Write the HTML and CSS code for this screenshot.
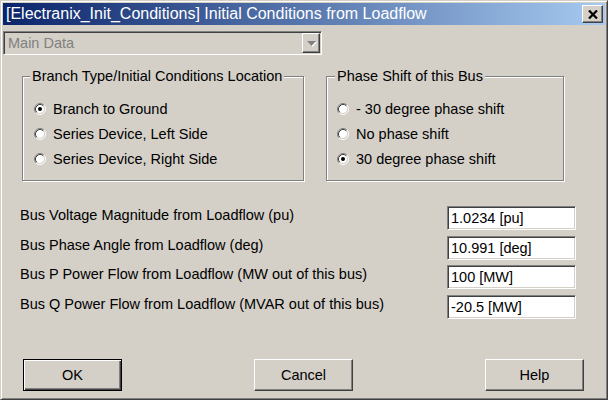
FILE: index.html
```html
<!DOCTYPE html>
<html>
<head>
<meta charset="utf-8">
<link rel="stylesheet" href="styles.css">
</head>
<body>
<div class="window">
  <div class="titlebar">
    <span class="title">[Electranix_Init_Conditions] Initial Conditions from Loadflow</span>
    <span class="close-btn"><svg width="10" height="9" viewBox="0 0 10 9"><path d="M1 0.5L9 8.5M9 0.5L1 8.5" stroke="#000" stroke-width="2.2"/></svg></span>
  </div>
  <div class="content">
    <div class="select">
      <span class="select-text">Main Data</span>
      <span class="select-btn"><svg width="11" height="7" viewBox="0 0 11 7"><path d="M2 2h9l-4.5 5z" fill="#fff"/><path d="M1 1h9l-4.5 5z" fill="#808080"/></svg></span>
    </div>
    <div class="groups">
      <fieldset class="group group-left">
        <legend>Branch Type/Initial Conditions Location</legend>
        <div class="radio-row"><svg class="radio" width="12" height="12" viewBox="0 0 12 12"><circle cx="6" cy="6" r="4.5" fill="#fff"/><path d="M2.11 9.89A5.5 5.5 0 0 1 9.89 2.11" stroke="#808080" fill="none"/><path d="M9.89 2.11A5.5 5.5 0 0 1 2.11 9.89" stroke="#fff" fill="none"/><path d="M2.82 9.18A4.5 4.5 0 0 1 9.18 2.82" stroke="#404040" fill="none"/><path d="M9.18 2.82A4.5 4.5 0 0 1 2.82 9.18" stroke="#d4d0c8" fill="none"/><circle cx="6" cy="6" r="2" fill="#000"/></svg><span>Branch to Ground</span></div>
        <div class="radio-row"><svg class="radio" width="12" height="12" viewBox="0 0 12 12"><circle cx="6" cy="6" r="4.5" fill="#fff"/><path d="M2.11 9.89A5.5 5.5 0 0 1 9.89 2.11" stroke="#808080" fill="none"/><path d="M9.89 2.11A5.5 5.5 0 0 1 2.11 9.89" stroke="#fff" fill="none"/><path d="M2.82 9.18A4.5 4.5 0 0 1 9.18 2.82" stroke="#404040" fill="none"/><path d="M9.18 2.82A4.5 4.5 0 0 1 2.82 9.18" stroke="#d4d0c8" fill="none"/></svg><span>Series Device, Left Side</span></div>
        <div class="radio-row"><svg class="radio" width="12" height="12" viewBox="0 0 12 12"><circle cx="6" cy="6" r="4.5" fill="#fff"/><path d="M2.11 9.89A5.5 5.5 0 0 1 9.89 2.11" stroke="#808080" fill="none"/><path d="M9.89 2.11A5.5 5.5 0 0 1 2.11 9.89" stroke="#fff" fill="none"/><path d="M2.82 9.18A4.5 4.5 0 0 1 9.18 2.82" stroke="#404040" fill="none"/><path d="M9.18 2.82A4.5 4.5 0 0 1 2.82 9.18" stroke="#d4d0c8" fill="none"/></svg><span>Series Device, Right Side</span></div>
      </fieldset>
      <fieldset class="group group-right">
        <legend>Phase Shift of this Bus</legend>
        <div class="radio-row"><svg class="radio" width="12" height="12" viewBox="0 0 12 12"><circle cx="6" cy="6" r="4.5" fill="#fff"/><path d="M2.11 9.89A5.5 5.5 0 0 1 9.89 2.11" stroke="#808080" fill="none"/><path d="M9.89 2.11A5.5 5.5 0 0 1 2.11 9.89" stroke="#fff" fill="none"/><path d="M2.82 9.18A4.5 4.5 0 0 1 9.18 2.82" stroke="#404040" fill="none"/><path d="M9.18 2.82A4.5 4.5 0 0 1 2.82 9.18" stroke="#d4d0c8" fill="none"/></svg><span>- 30 degree phase shift</span></div>
        <div class="radio-row"><svg class="radio" width="12" height="12" viewBox="0 0 12 12"><circle cx="6" cy="6" r="4.5" fill="#fff"/><path d="M2.11 9.89A5.5 5.5 0 0 1 9.89 2.11" stroke="#808080" fill="none"/><path d="M9.89 2.11A5.5 5.5 0 0 1 2.11 9.89" stroke="#fff" fill="none"/><path d="M2.82 9.18A4.5 4.5 0 0 1 9.18 2.82" stroke="#404040" fill="none"/><path d="M9.18 2.82A4.5 4.5 0 0 1 2.82 9.18" stroke="#d4d0c8" fill="none"/></svg><span>No phase shift</span></div>
        <div class="radio-row"><svg class="radio" width="12" height="12" viewBox="0 0 12 12"><circle cx="6" cy="6" r="4.5" fill="#fff"/><path d="M2.11 9.89A5.5 5.5 0 0 1 9.89 2.11" stroke="#808080" fill="none"/><path d="M9.89 2.11A5.5 5.5 0 0 1 2.11 9.89" stroke="#fff" fill="none"/><path d="M2.82 9.18A4.5 4.5 0 0 1 9.18 2.82" stroke="#404040" fill="none"/><path d="M9.18 2.82A4.5 4.5 0 0 1 2.82 9.18" stroke="#d4d0c8" fill="none"/><circle cx="6" cy="6" r="2" fill="#000"/></svg><span>30 degree phase shift</span></div>
      </fieldset>
    </div>
    <div class="fields">
      <div class="field-row"><span class="field-label">Bus Voltage Magnitude from Loadflow (pu)</span><span class="field-input">1.0234 [pu]</span></div>
      <div class="field-row"><span class="field-label">Bus Phase Angle from Loadflow (deg)</span><span class="field-input">10.991 [deg]</span></div>
      <div class="field-row"><span class="field-label">Bus P Power Flow from Loadflow (MW out of this bus)</span><span class="field-input">100 [MW]</span></div>
      <div class="field-row"><span class="field-label">Bus Q Power Flow from Loadflow (MVAR out of this bus)</span><span class="field-input">-20.5 [MW]</span></div>
    </div>
    <div class="buttons">
      <span class="btn btn-default">OK</span>
      <span class="btn">Cancel</span>
      <span class="btn">Help</span>
    </div>
  </div>
</div>
</body>
</html>
```
FILE: styles.css
```css
html, body {
  margin: 0;
  padding: 0;
  background: #d4d0c8;
}
body {
  font-family: "Liberation Sans", Arial, sans-serif;
  font-size: 14.5px;
  color: #000;
}
.window {
  width: 608px;
  height: 400px;
  box-sizing: border-box;
  border: 1px solid;
  border-color: #d4d0c8 #404040 #404040 #d4d0c8;
  box-shadow: inset 1px 1px #fff, inset -1px -1px #808080;
  padding: 2px;
  background: #d4d0c8;
}
.titlebar {
  height: 22px;
  background: linear-gradient(to right, #0a246a, #a6caf0);
  display: flex;
  align-items: center;
  justify-content: space-between;
  padding: 0 2px 0 3px;
}
.title {
  color: #fff;
  font-size: 16px;
  line-height: 18px;
  white-space: nowrap;
}
.close-btn {
  width: 21px;
  height: 18px;
  box-sizing: border-box;
  background: #d4d0c8;
  border: 1px solid;
  border-color: #fff #404040 #404040 #fff;
  box-shadow: inset -1px -1px #808080;
  display: flex;
  align-items: center;
  justify-content: center;
}
.content {
  display: flex;
  flex-direction: column;
}
.select {
  margin-top: 6px;
  width: 319px;
  height: 24px;
  box-sizing: border-box;
  border: 1px solid;
  border-color: #808080 #fff #fff #808080;
  box-shadow: inset 1px 1px #404040, inset -1px -1px #d4d0c8;
  padding: 1px;
  display: flex;
  align-items: stretch;
}
.select-text {
  flex: 1;
  color: #808080;
  padding-left: 3px;
  line-height: 20px;
}
.select-btn {
  width: 18px;
  box-sizing: border-box;
  border: 1px solid;
  border-color: #fff #404040 #404040 #fff;
  box-shadow: inset -1px -1px #808080;
  display: flex;
  align-items: center;
  justify-content: center;
}
.groups {
  display: flex;
  margin-top: 13px;
}
.group {
  margin: 0;
  min-inline-size: 0;
  box-sizing: border-box;
  border: 1px solid #808080;
  box-shadow: inset 1px 1px #fff, 1px 1px #fff;
  padding: 12px 0 9px 11px;
}
.group legend {
  padding: 0 2px;
  margin-left: -4px;
  line-height: 16px;
  background: #d4d0c8;
}
.group-left {
  margin-left: 19px;
  width: 282px;
}
.group-right {
  margin-left: 22px;
  width: 238px;
  padding-left: 10px;
}
.group-right legend {
  margin-left: -2px;
}
.radio-row {
  display: flex;
  align-items: center;
  height: 25px;
}
.radio {
  margin-right: 7px;
  flex: none;
}
.fields {
  margin-top: 25px;
  display: flex;
  flex-direction: column;
}
.field-row {
  display: flex;
  align-items: flex-start;
  height: 24px;
  margin-bottom: 5.5px;
}
.field-label {
  flex: 1;
  margin-left: 17px;
  line-height: 16px;
  padding-top: 1px;
}
.field-input {
  width: 129px;
  height: 24px;
  box-sizing: border-box;
  margin-right: 29px;
  background: #fff;
  border: 1px solid;
  border-color: #808080 #fff #fff #808080;
  box-shadow: inset 1px 1px #404040, inset -1px -1px #d4d0c8;
  padding-left: 3px;
  line-height: 23px;
}
.buttons {
  margin-top: 35px;
  display: flex;
  justify-content: space-between;
  padding: 0 21px 0 20px;
}
.btn {
  width: 99px;
  height: 32px;
  box-sizing: border-box;
  border: 1px solid;
  border-color: #fff #404040 #404040 #fff;
  box-shadow: inset -1px -1px #808080;
  display: flex;
  align-items: center;
  justify-content: center;
}
.btn-default {
  border-color: #000;
  box-shadow: inset 1px 1px #fff, inset -1px -1px #404040, inset -2px -2px #808080;
}
```
